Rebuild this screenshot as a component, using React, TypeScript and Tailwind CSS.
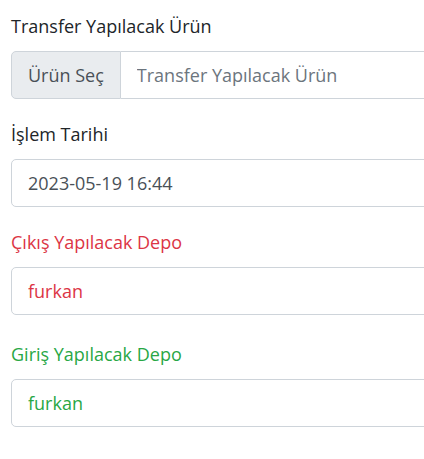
import React from "react";

const font = { fontFamily: '"Open Sans", "Noto Sans", sans-serif' };

const inputBase =
	"h-[48px] w-full border border-[#ced4da] bg-white px-[16px] text-[18px] outline-none";

export default function App() {
	return (
		<div className="w-[424px] h-[459px] overflow-hidden bg-white" style={font}>
			<div className="w-[520px] pl-[11px] pt-[13px] flex flex-col">
				{/* Ürün */}
				<label className="block text-[18px] leading-[27px] text-[#212529] mb-[11px]">
					Transfer Yapılacak Ürün
				</label>
				<div className="flex h-[48px]">
					<span className="flex shrink-0 whitespace-nowrap items-center px-[16px] text-[18px] text-[#495057] bg-[#e9ecef] border border-[#ced4da] rounded-l-[5px]">
						Ürün Seç
					</span>
					<input
						className={`${inputBase} min-w-0 border-l-0 rounded-r-[5px] text-[#495057] placeholder-[#6c757d]`}
						placeholder="Transfer Yapılacak Ürün"
						readOnly
					/>
				</div>

				{/* Tarih */}
				<label className="block text-[18px] leading-[27px] text-[#212529] mt-[22px] mb-[11px]">
					İşlem Tarihi
				</label>
				<input
					className={`${inputBase} rounded-[5px] text-[#495057]`}
					defaultValue="2023-05-19 16:44"
					readOnly
				/>

				{/* Çıkış */}
				<label className="block text-[18px] leading-[27px] text-[#dc3545] mt-[22px] mb-[11px]">
					Çıkış Yapılacak Depo
				</label>
				<input
					className={`${inputBase} rounded-[5px] text-[#dc3545]`}
					defaultValue="furkan"
					readOnly
				/>

				{/* Giriş */}
				<label className="block text-[18px] leading-[27px] text-[#28a745] mt-[26px] mb-[11px]">
					Giriş Yapılacak Depo
				</label>
				<input
					className={`${inputBase} rounded-[5px] text-[#28a745]`}
					defaultValue="furkan"
					readOnly
				/>
			</div>
		</div>
	);
}
